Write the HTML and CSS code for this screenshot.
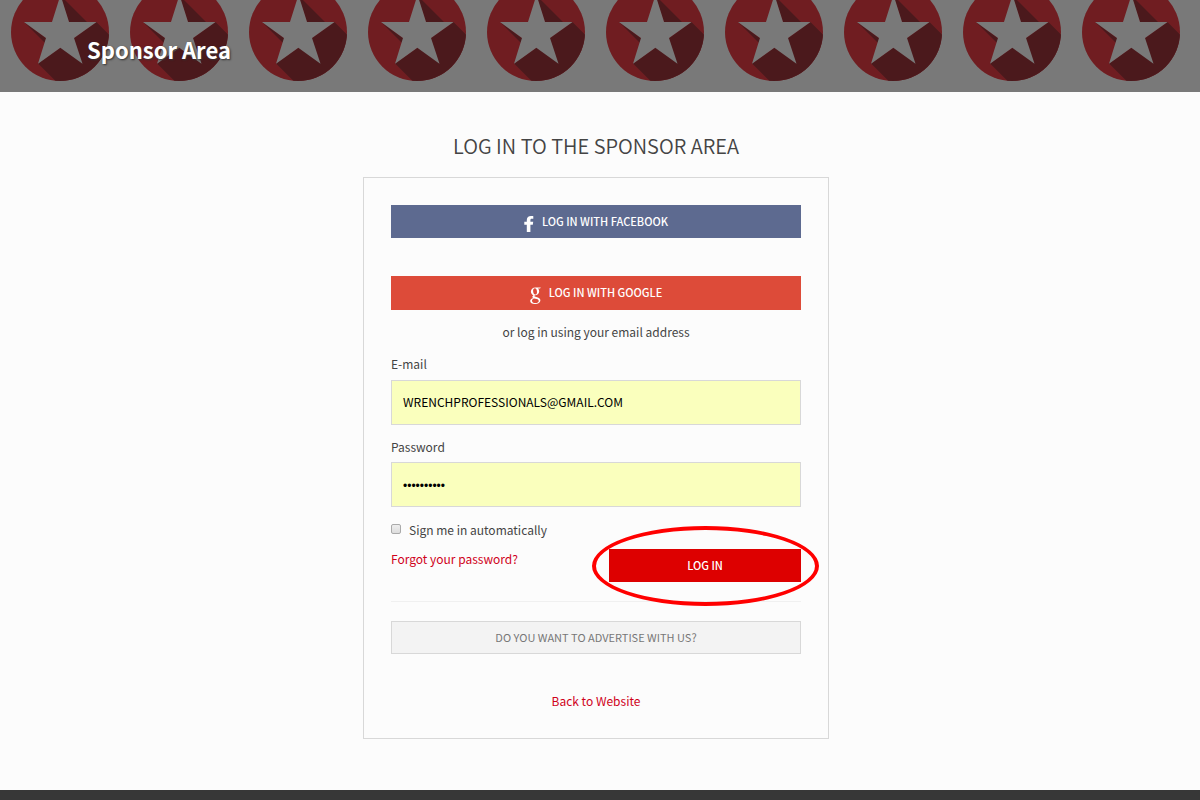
FILE: index.html
```html
<!DOCTYPE html>
<html lang="en">
<head>
    <meta charset="UTF-8">
    <meta name="viewport" content="width=device-width, initial-scale=1.0">
    <title>Sponsor Area</title>
    <link rel="stylesheet" href="styles.css">
</head>
<body>
    <header class="banner">
        <svg class="banner-stars" aria-hidden="true">
            <defs>
                <clipPath id="disc"><circle cx="60" cy="32" r="49"/></clipPath>
                <pattern id="stars" width="119" height="100" patternUnits="userSpaceOnUse">
                    <circle cx="60" cy="32" r="49" fill="#701d21"/>
                    <g clip-path="url(#disc)" fill="#4b191c">
                        <path d="M60 -5 L87 22 H69 Z"/>
                        <path d="M24 22 L46 44 V38 Z"/>
                        <path d="M96.500 22 L130 55.500 V130 H104.500 L38 63.500 L60 48 L74 38 Z"/>
                    </g>
                    <path d="M60.500 -5 L69 22 H96.500 L74 38 L82.500 63.800 L60.300 47.800 L38 63.800 L46 38 L24 22 H52 Z" fill="#797979"/>
                </pattern>
            </defs>
            <rect width="100%" height="100%" fill="url(#stars)"/>
        </svg>
        <h1>Sponsor Area</h1>
    </header>

    <main>
        <h2>LOG IN TO THE SPONSOR AREA</h2>
        <form class="login-box">
            <button type="button" class="btn facebook">
                <svg width="10" height="16" viewBox="0 0 10 16" aria-hidden="true">
                    <path d="M2.800 16V8.700H0.300V5.800H2.800V4C2.800 1.400 4.500 0 7 0C8.100 0 9 .1 9.300 .15V2.700H7.700C6.600 2.700 6.400 3.300 6.400 4.200V5.800H9.200L8.800 8.700H6.400V16Z" fill="#fff"/>
                </svg>
                LOG IN WITH FACEBOOK
            </button>
            <button type="button" class="btn google">
                <svg width="11" height="17" viewBox="0 0 11 17" aria-hidden="true">
                    <path fill="#fff" fill-rule="evenodd" d="M10.900 .4L10 1.500H8C8.800 2.200 9.200 3.200 9.200 4.300C9.200 6.600 7.600 8.200 5.100 8.300C4.300 8.700 4.100 9.200 4.900 9.500L7.800 10.400C9.600 11 10.400 12 10.400 13.300C10.400 15.500 8.300 17 5 17C2.100 17 .2 15.900 .2 14C.2 12.500 1.300 11.500 3.300 11C2 10.200 2 9 3.500 8.200C1.900 7.700 .9 6.300 .9 4.500C.9 2.100 2.700 .4 5.400 .4ZM4.800 1.200C3.700 1.200 3.100 2.200 3.100 3.800C3.100 6 4 7.500 5.300 7.500C6.400 7.500 7 6.500 7 4.900C7 2.700 6.100 1.200 4.800 1.200ZM4.200 11.400C2.700 11.800 2 12.600 2 13.700C2 15.100 3.300 16 5.400 16C7.500 16 8.700 15.200 8.700 13.900C8.700 12.900 8 12.400 6.700 12Z"/>
                </svg>
                LOG IN WITH GOOGLE
            </button>
            <p class="or-text">or log in using your email address</p>

            <label for="email">E-mail</label>
            <input type="text" id="email" class="field" value="WRENCHPROFESSIONALS@GMAIL.COM">
            <label for="password">Password</label>
            <input type="password" id="password" class="field" value="wrenchpros">

            <div class="remember">
                <input type="checkbox" id="remember">
                <label for="remember">Sign me in automatically</label>
            </div>
            <div class="actions">
                <a href="#">Forgot your password?</a>
                <div class="submit">
                    <button type="submit" class="btn login">LOG IN</button>
                    <span class="highlight"></span>
                </div>
            </div>
            <hr>
            <button type="button" class="btn advertise">DO YOU WANT TO ADVERTISE WITH US?</button>
            <a href="#" class="back">Back to Website</a>
        </form>
    </main>

    <footer></footer>
</body>
</html>
```

FILE: styles.css
```css
* {
    box-sizing: border-box;
}
body {
    margin: 0;
    min-height: 100vh;
    display: flex;
    flex-direction: column;
    background-color: #fcfcfc;
    color: #444;
    font-family: "Noto Sans CJK SC", "Open Sans", sans-serif;
    font-size: 12px;
    line-height: 20px;
}
.banner {
    position: relative;
    background-color: #797979;
    padding: 33px 87px 27px;
}
.banner-stars {
    position: absolute;
    top: 0;
    left: 0;
    width: 100%;
    height: 100%;
}
h1 {
    position: relative;
    margin: 0;
    color: #fff;
    font-size: 22px;
    font-weight: 700;
    line-height: 32px;
    text-shadow: 1px 1px 2px #333;
}
main {
    flex: 1;
    display: flex;
    flex-direction: column;
    align-items: center;
    padding: 39px 8px 51px 0;
}
h2 {
    margin: 0 0 16px;
    font-family: "Noto Sans CJK SC DemiLight", "Noto Sans CJK SC", sans-serif;
    font-size: 20px;
    font-weight: 350;
    line-height: 30px;
}
.login-box {
    width: 100%;
    max-width: 466px;
    display: flex;
    flex-direction: column;
    padding: 27px;
    border: 1px solid #d8d8d8;
}
.btn {
    display: flex;
    align-items: center;
    justify-content: center;
    gap: 8px;
    width: 100%;
    height: 33px;
    padding: 0 0 2px;
    border: none;
    color: #fff;
    font-family: inherit;
    font-size: 11px;
    font-weight: 500;
    line-height: 16px;
    cursor: pointer;
}
.btn svg {
    margin-top: 6px;
}
.facebook {
    background-color: #5d6a90;
}
.google {
    height: 34px;
    margin-top: 38px;
    background-color: #dd4b39;
}
.or-text {
    margin: 12px 0;
    text-align: center;
}
.field {
    width: 100%;
    height: 45px;
    margin: 6px 0 12px;
    padding: 0 11px 2px;
    border: 1px solid #d8d8d8;
    background-color: #faffbd;
    color: #000;
    font-family: inherit;
    font-size: 12px;
    outline: none;
}
.field[type="password"] {
    margin-top: 5px;
    margin-bottom: 13px;
    padding-top: 2px;
    padding-bottom: 0;
    font-family: "Liberation Sans", sans-serif;
}
.remember {
    display: flex;
    align-items: center;
    gap: 8px;
    height: 20px;
}
.remember input {
    appearance: none;
    width: 10px;
    height: 10px;
    margin: 0 0 2px;
    border: 1px solid #aaa;
    border-radius: 2px;
    background: linear-gradient(#eee, #ddd);
}
a {
    color: #d0021b;
    text-decoration: none;
}
.actions {
    display: flex;
    justify-content: space-between;
    margin-top: 9px;
}
.submit {
    position: relative;
    width: 192px;
}
.login {
    background-color: #d00;
}
.highlight {
    position: absolute;
    top: -23px;
    left: -17px;
    right: -18px;
    bottom: -24px;
    border: 4px solid #f00;
    border-radius: 50%;
    pointer-events: none;
}
hr {
    width: 100%;
    margin: 19px 0;
    border: none;
    border-top: 1px solid #f0f0f0;
}
.advertise {
    border: 1px solid #d8d8d8;
    background-color: #f3f3f3;
    color: #777;
    font-weight: 400;
}
.back {
    margin-top: 37px;
    text-align: center;
}
footer {
    height: 10px;
    background-color: #373737;
}
```
